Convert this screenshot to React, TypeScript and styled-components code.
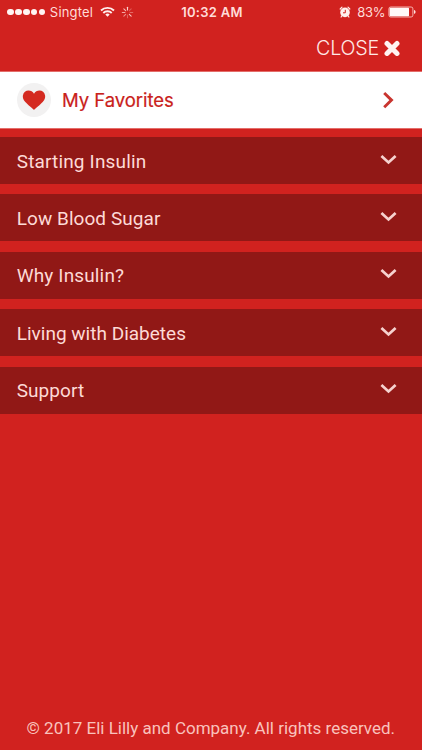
import React from 'react';
import styled, { createGlobalStyle } from 'styled-components';

const GlobalStyle = createGlobalStyle`
  * { box-sizing: border-box; }
  body { margin: 0; background: #d1221f; }
`;

const Screen = styled.main`
  display: flex;
  flex-direction: column;
  height: 750px;
  background: #d1221f;
  color: #fddad6;
  font-family: Roboto, 'Open Sans', sans-serif;
  overflow: hidden;
  white-space: nowrap;
`;

const StatusBar = styled.header`
  display: grid;
  grid-template-columns: 1fr auto 1fr;
  align-items: center;
  height: 24px;
  padding: 0 6px 0 7px;
  font: 400 13px/24px Inter, sans-serif;
  color: #ffdcd8;
`;

const Carrier = styled.div`
  display: flex;
  align-items: center;
`;

const Dots = styled.div`
  display: flex;
  gap: 1.1px;
  margin-right: 4.5px;
`;

const Dot = styled.span`
  width: 6.8px;
  height: 6.8px;
  border-radius: 50%;
  background: #fff4f2;
`;

const CarrierName = styled.span`
  letter-spacing: 0.18px;
  margin-right: 6.5px;
`;

const Spinner = styled.svg`
  margin-left: 6px;
`;

const Clock = styled.div`
  font-weight: 600;
  letter-spacing: 0.28px;
  padding-left: 1px;
`;

const Battery = styled.div`
  display: flex;
  align-items: center;
  justify-content: flex-end;
`;

const Percent = styled.span`
  margin: 0 3px 0 6px;
  letter-spacing: -0.4px;
`;

const CloseBar = styled.div`
  display: flex;
  justify-content: flex-end;
  height: 48px;
  padding-right: 22px;
`;

const CloseButton = styled.button`
  display: flex;
  align-items: center;
  height: 48px;
  padding: 0;
  border: 0;
  background: none;
  color: #ffe9e6;
  font: 300 19.7px/48px Inter, sans-serif;
  letter-spacing: -0.2px;
  gap: 5px;
`;

const Favorites = styled.a`
  display: flex;
  align-items: center;
  height: 56px;
  padding: 0 28px 0 17px;
  background: #fff;
  box-shadow: 0 0 0 0.6px #f0a09c;
  color: #c9211a;
`;

const HeartBadge = styled.span`
  display: flex;
  align-items: center;
  justify-content: center;
  width: 34px;
  height: 34px;
  border-radius: 50%;
  background: #f2f1f1;
`;

const FavoritesLabel = styled.span`
  flex: 1;
  margin-left: 11px;
  font: 400 18.5px/56px Inter, sans-serif;
  -webkit-text-stroke: 0.2px currentColor;
  letter-spacing: -0.05px;
`;

const Menu = styled.nav`
  display: flex;
  flex-direction: column;
  gap: 10.4px;
  padding-top: 9px;
`;

const MenuRow = styled.a<{ $tracking: number }>`
  display: flex;
  align-items: center;
  justify-content: space-between;
  height: 47px;
  padding: 1px 25px 0 16.7px;
  background: #911816;
  font-size: 19px;
  letter-spacing: ${(p) => p.$tracking}px;
`;

const Chevron = styled.svg`
  margin-top: -4px;
`;

const Footer = styled.footer`
  margin-top: auto;
  padding: 0 0 9px 26.5px;
  font-size: 17px;
  line-height: 26px;
  color: #f9c2bd;
`;

const sections = [
  { title: 'Starting Insulin', tracking: 0.16 },
  { title: 'Low Blood Sugar', tracking: 0.06 },
  { title: 'Why Insulin?', tracking: 0.15 },
  { title: 'Living with Diabetes', tracking: 0.01 },
  { title: 'Support', tracking: 0.06 },
];

const spokes = [1, 0.3, 0.4, 0.9, 0.35, 0.6, 0.75, 0.85];

export default function App() {
  return (
    <>
      <GlobalStyle />
      <Screen>
        <StatusBar>
          <Carrier>
            <Dots>
              {[0, 1, 2, 3, 4].map((n) => (
                <Dot key={n} />
              ))}
            </Dots>
            <CarrierName>Singtel</CarrierName>
            <svg width="15" height="12" viewBox="0 0 15 12" fill="none" stroke="#fff0ee" strokeWidth="1.9">
              <path d="M1 4.5a9.3 9.3 0 0 1 13 0" />
              <path d="M3.3 7a6 6 0 0 1 8.4 0" />
              <path d="M7.5 10.8 5.3 8.6a3.2 3.2 0 0 1 4.4 0z" fill="#fff0ee" stroke="none" />
            </svg>
            <Spinner width="13" height="13" viewBox="-6.5 -6.5 13 13">
              {spokes.map((opacity, i) => (
                <path
                  key={i}
                  d="M0-2.6V-5.2"
                  stroke="#ffd5d0"
                  strokeWidth="1.1"
                  strokeLinecap="round"
                  opacity={opacity}
                  transform={`rotate(${i * 45})`}
                />
              ))}
            </Spinner>
          </Carrier>
          <Clock>10:32 AM</Clock>
          <Battery>
            <svg width="12" height="12" viewBox="0 0 12 12">
              <circle cx="6" cy="6.4" r="4.8" fill="#fff0ee" />
              <path d="M1.2 3 3 1.2M10.8 3 9 1.2M2.8 10l-.7 1M9.2 10l.7 1" stroke="#fff0ee" strokeWidth="1.2" strokeLinecap="round" />
              <path d="M6.3 3.8V6.8H4" stroke="#d1221f" strokeWidth="1" fill="none" />
            </svg>
            <Percent>83%</Percent>
            <svg width="28" height="12" viewBox="0 0 28 12">
              <rect x=".9" y="1" width="24" height="10" rx="1.8" fill="none" stroke="#ffd5d0" strokeWidth=".8" />
              <rect x="1.6" y="1.8" width="19.4" height="8.4" rx=".6" fill="#fff8f7" />
              <path d="M26 4.1c2.1.6 2.1 3.2 0 3.8z" fill="#ffe2df" />
            </svg>
          </Battery>
        </StatusBar>
        <CloseBar>
          <CloseButton>
            CLOSE
            <svg width="16" height="16" viewBox="0 0 16 16">
              <path
                d="M3.5 3.9 12.5 12.9M12.5 3.9 3.5 12.9"
                stroke="#fff3f1"
                strokeWidth="3.8"
                strokeLinecap="square"
                strokeLinejoin="round"
              />
              <path d="M3 3.4 13 13.4M13 3.4 3 13.4" stroke="#fff3f1" strokeWidth="5" strokeLinecap="round" />
            </svg>
          </CloseButton>
        </CloseBar>
        <Favorites>
          <HeartBadge>
            <svg width="24" height="22" viewBox="0 0 24 22">
              <path
                d="M12 21C10.6 19.6 6 15.9 3.3 13 1 10.5.6 8.5.9 6.5 1.4 3.3 3.9 1.6 6.5 1.6c2.4 0 4.2 1.2 5.5 3.2 1.3-2 3.1-3.2 5.5-3.2 2.6 0 5.1 1.7 5.6 4.9.3 2-.1 4-2.4 6.5-2.7 2.9-7.3 6.6-8.7 8z"
                fill="#d42a20"
              />
            </svg>
          </HeartBadge>
          <FavoritesLabel>My Favorites</FavoritesLabel>
          <svg width="12" height="18" viewBox="0 0 12 18">
            <path d="m2.2 2 7.3 7.1-7.3 7.1" fill="none" stroke="#c9352f" strokeWidth="2.9" />
          </svg>
        </Favorites>
        <Menu>
          {sections.map((s) => (
            <MenuRow key={s.title} $tracking={s.tracking}>
              {s.title}
              <Chevron width="17" height="11" viewBox="0 0 17 11">
                <path d="m1.4 1.9 7.1 6.6 7.1-6.6" fill="none" stroke="#f6d2cf" strokeWidth="2.7" />
              </Chevron>
            </MenuRow>
          ))}
        </Menu>
        <Footer>© 2017 Eli Lilly and Company. All rights reserved.</Footer>
      </Screen>
    </>
  );
}
